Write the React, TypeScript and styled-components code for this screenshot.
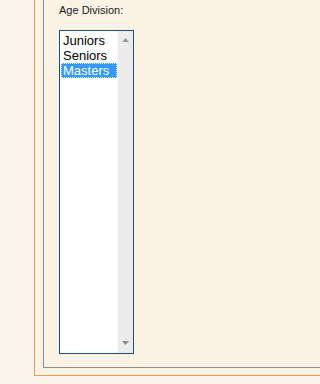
import * as React from "react"
import styled, { createGlobalStyle } from "styled-components"

const divisions = ["Juniors", "Seniors", "Masters"]

const App = () => {
  const [selected, setSelected] = React.useState("Masters")
  return (
    <>
      <GlobalStyle />
      <Page>
        <OuterFrame>
          <InnerFrame>
            <Label>Age Division:</Label>
            <ListBox>
              <Items>
                {divisions.map((d) => (
                  <Item key={d} $active={d === selected} onClick={() => setSelected(d)}>
                    {d}
                  </Item>
                ))}
              </Items>
              <ScrollTrack>
                <Arrow viewBox="0 0 7 4">
                  <path d="M3.5 0L7 4H0Z" fill="#9a9a9a" />
                </Arrow>
                <Arrow viewBox="0 0 7 4">
                  <path d="M0 0H7L3.5 4Z" fill="#8a8a8a" />
                </Arrow>
              </ScrollTrack>
            </ListBox>
          </InnerFrame>
        </OuterFrame>
      </Page>
    </>
  )
}

export default App

const GlobalStyle = createGlobalStyle`
  html, body {
    margin: 0;
    padding: 0;
    background: #f9f5ec;
    overflow: hidden;
  }
`

const Page = styled.div`
  box-sizing: border-box;
  height: 384px;
  padding: 0 0 8px 34px;
  font-family: "Liberation Sans", Arial, sans-serif;
`

const OuterFrame = styled.div`
  box-sizing: border-box;
  height: 100%;
  padding: 0 0 7px 8px;
  background: #fbf3e6;
  border-left: 1px solid #ee9a55;
  border-bottom: 1px solid #ee9a55;
`

const InnerFrame = styled.div`
  box-sizing: border-box;
  height: 100%;
  padding: 4px 0 0 15px;
  border-left: 1px solid #8c8c8c;
  border-bottom: 1px solid #8c8c8c;
`

const Label = styled.div`
  font-size: 11px;
  line-height: 13px;
  color: #1a1a1a;
`

const ListBox = styled.div`
  box-sizing: border-box;
  display: flex;
  width: 75px;
  height: 324px;
  margin-top: 13px;
  background: #ffffff;
  border: 1px solid #1d4f7a;
`

const Items = styled.div`
  flex: 1;
  padding: 2px 0 0 1px;
`

const Item = styled.div<{ $active: boolean }>`
  height: 15px;
  padding-left: 2px;
  font-size: 13px;
  line-height: 15px;
  color: ${(p) => (p.$active ? "#ffffff" : "#000000")};
  background: ${(p) => (p.$active ? "#3399ff" : "transparent")};
  outline: ${(p) => (p.$active ? "1px dotted #d8ebff" : "none")};
  outline-offset: -1px;
  cursor: default;
  white-space: nowrap;
`

const ScrollTrack = styled.div`
  box-sizing: border-box;
  width: 16px;
  display: flex;
  flex-direction: column;
  justify-content: space-between;
  align-items: center;
  padding: 7px 0 8px;
  background: #ececec;
  border-left: 1px solid #f6f6f6;
`

const Arrow = styled.svg`
  width: 7px;
  height: 4px;
  display: block;
`
